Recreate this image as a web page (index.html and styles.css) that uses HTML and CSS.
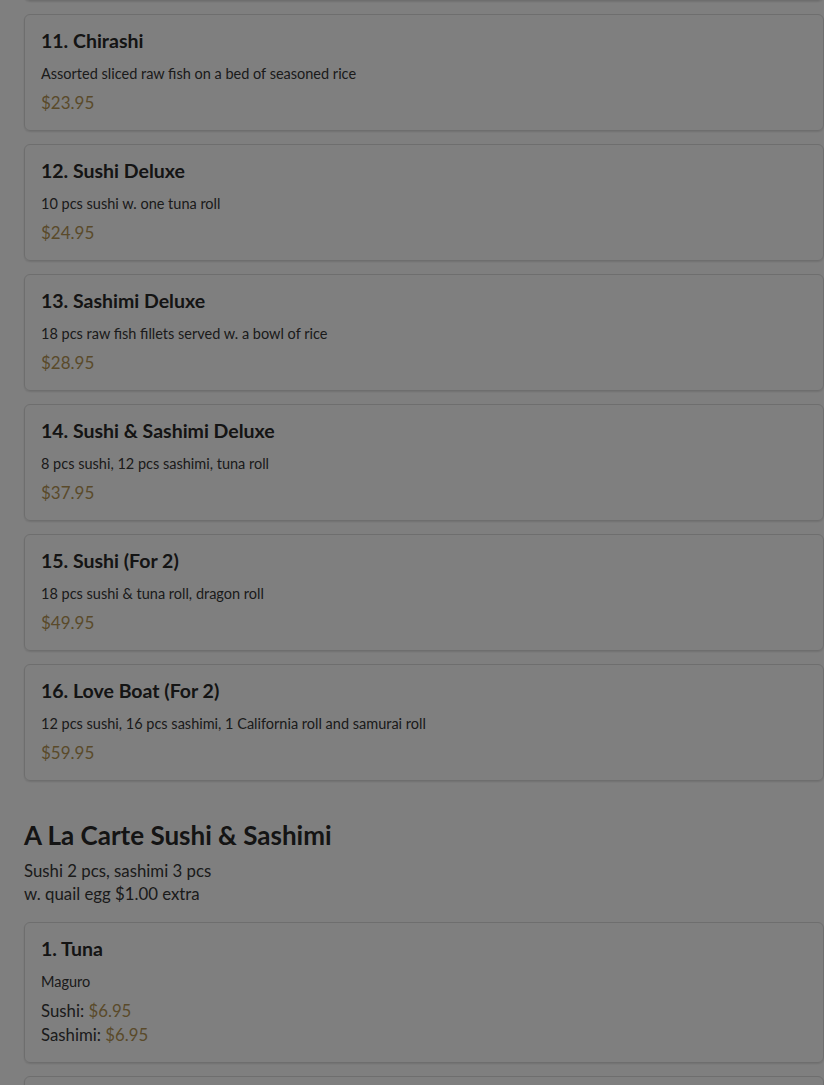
FILE: index.html
```html
<!DOCTYPE html>
<html>
<head>
<meta charset="utf-8">
<link rel="stylesheet" href="styles.css">
</head>
<body>
<main class="page">
  <div class="list">
    <div class="card">
      <h3 class="title">10. Sushi Regular</h3>
      <p class="desc">8 pcs sushi w. California roll</p>
      <p class="price">$21.95</p>
    </div>
    <div class="card">
      <h3 class="title">11. Chirashi</h3>
      <p class="desc">Assorted sliced raw fish on a bed of seasoned rice</p>
      <p class="price">$23.95</p>
    </div>
    <div class="card">
      <h3 class="title">12. Sushi Deluxe</h3>
      <p class="desc">10 pcs sushi w. one tuna roll</p>
      <p class="price">$24.95</p>
    </div>
    <div class="card">
      <h3 class="title">13. Sashimi Deluxe</h3>
      <p class="desc">18 pcs raw fish fillets served w. a bowl of rice</p>
      <p class="price">$28.95</p>
    </div>
    <div class="card">
      <h3 class="title">14. Sushi &amp; Sashimi Deluxe</h3>
      <p class="desc">8 pcs sushi, 12 pcs sashimi, tuna roll</p>
      <p class="price">$37.95</p>
    </div>
    <div class="card">
      <h3 class="title">15. Sushi (For 2)</h3>
      <p class="desc">18 pcs sushi &amp; tuna roll, dragon roll</p>
      <p class="price">$49.95</p>
    </div>
    <div class="card">
      <h3 class="title">16. Love Boat (For 2)</h3>
      <p class="desc">12 pcs sushi, 16 pcs sashimi, 1 California roll and samurai roll</p>
      <p class="price">$59.95</p>
    </div>
  </div>

  <section class="section">
    <h2 class="section-title">A La Carte Sushi &amp; Sashimi</h2>
    <p class="section-note">Sushi 2 pcs, sashimi 3 pcs<br>w. quail egg $1.00 extra</p>
    <div class="list">
      <div class="card">
        <h3 class="title">1. Tuna</h3>
        <p class="desc">Maguro</p>
        <p class="line">Sushi: <span class="amt">$6.95</span></p>
        <p class="line">Sashimi: <span class="amt">$6.95</span></p>
      </div>
      <div class="card">
        <h3 class="title">2. Salmon</h3>
        <p class="desc">Sake</p>
        <p class="line">Sushi: <span class="amt">$6.95</span></p>
        <p class="line">Sashimi: <span class="amt">$6.95</span></p>
      </div>
    </div>
  </section>
</main>
<div class="overlay"></div>
</body>
</html>
```

FILE: styles.css
```css
html, body {
  margin: 0;
  padding: 0;
  background: #ffffff;
  overflow: hidden;
}
body {
  font-family: Lato, "Open Sans", sans-serif;
  color: #2a2a2a;
}
.page {
  margin-top: -116px;
  padding-left: 24px;
  width: 800px;
}
.list {
  display: flex;
  flex-direction: column;
  gap: 13px;
}
.card {
  border: 1px solid #dcdcdc;
  border-radius: 6px;
  box-shadow: 0 1px 2px rgba(0,0,0,0.12);
  padding: 14px 16px 15px 16px;
  height: 86px;
}
.title {
  margin: 0;
  font-size: 19.5px;
  line-height: 24px;
  font-weight: 700;
  color: #282828;
}
.desc {
  margin: 11px 0 0;
  font-size: 14.5px;
  line-height: 20px;
  color: #363636;
}
.price {
  margin: 8px 0 0;
  font-size: 17px;
  line-height: 22px;
  color: #b49454;
}
.section {
  margin-top: 39px;
}
.section-title {
  margin: 0;
  font-size: 26px;
  line-height: 30px;
  font-weight: 700;
  color: #282828;
}
.section-note {
  margin: 9px 0 17px;
  font-size: 16.8px;
  line-height: 23px;
  color: #363636;
}
.section .card {
  height: 110px;
}
.line {
  margin: 0;
  font-size: 16.8px;
  line-height: 24px;
  color: #363636;
}
.desc + .line {
  margin-top: 7px;
}
.amt {
  color: #b49454;
}
.overlay {
  position: fixed;
  inset: 0;
  background: rgba(0,0,0,0.5);
}
```
